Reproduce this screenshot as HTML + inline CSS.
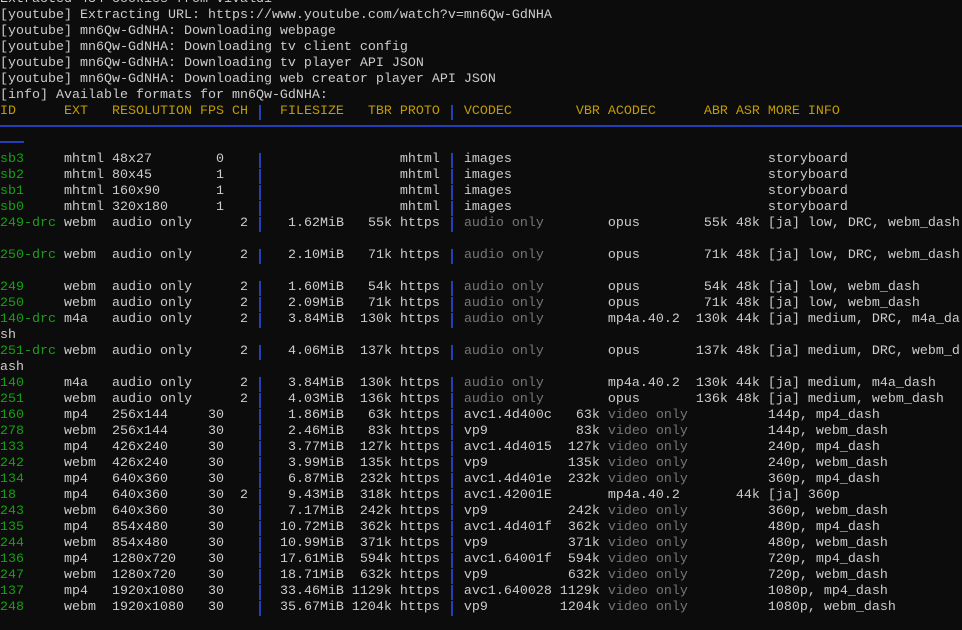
<!DOCTYPE html>
<html><head><meta charset="utf-8">
<style>
html,body{margin:0;padding:0;background:#0c0c0c;width:962px;height:630px;overflow:hidden}
pre{position:absolute;left:0;top:-8px;margin:0;font-family:"Liberation Mono","DejaVu Sans Mono",monospace;font-size:13.33px;line-height:16px;color:#cccccc;white-space:pre}
.g{color:#16a016}.y{color:#c19c00}.d{color:#767676}
.v{display:inline-block;width:8px;height:16px;vertical-align:top;background:linear-gradient(#2440b8,#2440b8) center/2px 15px no-repeat}
.h{position:absolute;background:#2440b8;height:2px}
</style></head><body>
<div class="h" style="left:0;top:125px;width:962px"></div>
<div class="h" style="left:0;top:141px;width:24px"></div>
<pre>Extracted 434 cookies from vivaldi
[youtube] Extracting URL: https://www.youtube.com/watch?v=mn6Qw-GdNHA
[youtube] mn6Qw-GdNHA: Downloading webpage
[youtube] mn6Qw-GdNHA: Downloading tv client config
[youtube] mn6Qw-GdNHA: Downloading tv player API JSON
[youtube] mn6Qw-GdNHA: Downloading web creator player API JSON
[info] Available formats for mn6Qw-GdNHA:
<span class="y">ID      EXT   RESOLUTION FPS CH </span><span class="v"></span><span class="y">  FILESIZE   TBR PROTO </span><span class="v"></span><span class="y"> VCODEC        VBR ACODEC      ABR ASR MORE INFO</span>


<span class="g">sb3</span>     mhtml 48x27        0    <span class="v"></span>                 mhtml <span class="v"></span> images                                storyboard
<span class="g">sb2</span>     mhtml 80x45        1    <span class="v"></span>                 mhtml <span class="v"></span> images                                storyboard
<span class="g">sb1</span>     mhtml 160x90       1    <span class="v"></span>                 mhtml <span class="v"></span> images                                storyboard
<span class="g">sb0</span>     mhtml 320x180      1    <span class="v"></span>                 mhtml <span class="v"></span> images                                storyboard
<span class="g">249-drc</span> webm  audio only      2 <span class="v"></span>   1.62MiB   55k https <span class="v"></span> <span class="d">audio only</span>        opus        55k 48k [ja] low, DRC, webm_dash

<span class="g">250-drc</span> webm  audio only      2 <span class="v"></span>   2.10MiB   71k https <span class="v"></span> <span class="d">audio only</span>        opus        71k 48k [ja] low, DRC, webm_dash

<span class="g">249</span>     webm  audio only      2 <span class="v"></span>   1.60MiB   54k https <span class="v"></span> <span class="d">audio only</span>        opus        54k 48k [ja] low, webm_dash
<span class="g">250</span>     webm  audio only      2 <span class="v"></span>   2.09MiB   71k https <span class="v"></span> <span class="d">audio only</span>        opus        71k 48k [ja] low, webm_dash
<span class="g">140-drc</span> m4a   audio only      2 <span class="v"></span>   3.84MiB  130k https <span class="v"></span> <span class="d">audio only</span>        mp4a.40.2  130k 44k [ja] medium, DRC, m4a_da
sh
<span class="g">251-drc</span> webm  audio only      2 <span class="v"></span>   4.06MiB  137k https <span class="v"></span> <span class="d">audio only</span>        opus       137k 48k [ja] medium, DRC, webm_d
ash
<span class="g">140</span>     m4a   audio only      2 <span class="v"></span>   3.84MiB  130k https <span class="v"></span> <span class="d">audio only</span>        mp4a.40.2  130k 44k [ja] medium, m4a_dash
<span class="g">251</span>     webm  audio only      2 <span class="v"></span>   4.03MiB  136k https <span class="v"></span> <span class="d">audio only</span>        opus       136k 48k [ja] medium, webm_dash
<span class="g">160</span>     mp4   256x144     30    <span class="v"></span>   1.86MiB   63k https <span class="v"></span> avc1.4d400c   63k <span class="d">video only</span>          144p, mp4_dash
<span class="g">278</span>     webm  256x144     30    <span class="v"></span>   2.46MiB   83k https <span class="v"></span> vp9           83k <span class="d">video only</span>          144p, webm_dash
<span class="g">133</span>     mp4   426x240     30    <span class="v"></span>   3.77MiB  127k https <span class="v"></span> avc1.4d4015  127k <span class="d">video only</span>          240p, mp4_dash
<span class="g">242</span>     webm  426x240     30    <span class="v"></span>   3.99MiB  135k https <span class="v"></span> vp9          135k <span class="d">video only</span>          240p, webm_dash
<span class="g">134</span>     mp4   640x360     30    <span class="v"></span>   6.87MiB  232k https <span class="v"></span> avc1.4d401e  232k <span class="d">video only</span>          360p, mp4_dash
<span class="g">18</span>      mp4   640x360     30  2 <span class="v"></span>   9.43MiB  318k https <span class="v"></span> avc1.42001E       mp4a.40.2       44k [ja] 360p
<span class="g">243</span>     webm  640x360     30    <span class="v"></span>   7.17MiB  242k https <span class="v"></span> vp9          242k <span class="d">video only</span>          360p, webm_dash
<span class="g">135</span>     mp4   854x480     30    <span class="v"></span>  10.72MiB  362k https <span class="v"></span> avc1.4d401f  362k <span class="d">video only</span>          480p, mp4_dash
<span class="g">244</span>     webm  854x480     30    <span class="v"></span>  10.99MiB  371k https <span class="v"></span> vp9          371k <span class="d">video only</span>          480p, webm_dash
<span class="g">136</span>     mp4   1280x720    30    <span class="v"></span>  17.61MiB  594k https <span class="v"></span> avc1.64001f  594k <span class="d">video only</span>          720p, mp4_dash
<span class="g">247</span>     webm  1280x720    30    <span class="v"></span>  18.71MiB  632k https <span class="v"></span> vp9          632k <span class="d">video only</span>          720p, webm_dash
<span class="g">137</span>     mp4   1920x1080   30    <span class="v"></span>  33.46MiB 1129k https <span class="v"></span> avc1.640028 1129k <span class="d">video only</span>          1080p, mp4_dash
<span class="g">248</span>     webm  1920x1080   30    <span class="v"></span>  35.67MiB 1204k https <span class="v"></span> vp9         1204k <span class="d">video only</span>          1080p, webm_dash
</pre>
</body></html>
